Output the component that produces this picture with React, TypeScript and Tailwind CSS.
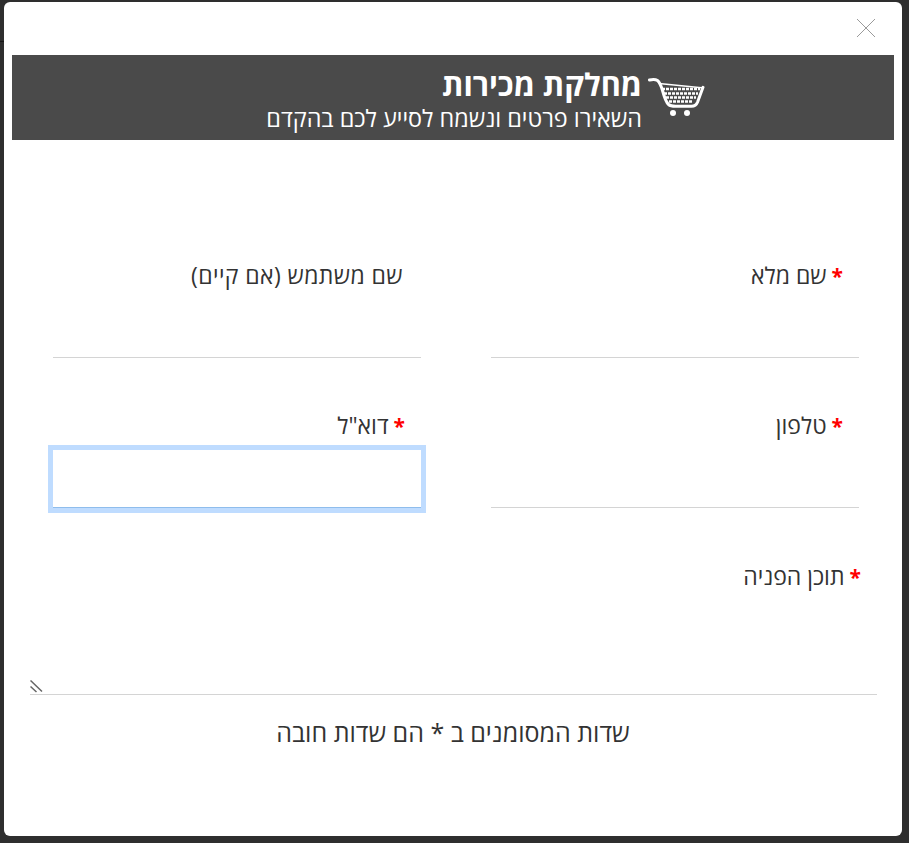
const labelClass = "block h-[30px] pr-4 text-[23px] leading-[30px] text-[#333]";
const fieldClass = "mt-[10px] block h-[58px] w-full border-b border-[#d4d4d4] bg-white px-3 text-[#333] outline-none";

function Star() {
  return <span className="ml-[5px] text-[21px] font-bold text-[#ff0000]">*</span>;
}

function CartIcon() {
  return (
    <svg width="58" height="42" viewBox="0 0 58 42" fill="none" className="shrink-0">
      <path d="M1.500 3c3-.8 6-.8 8 .5 2 1.500 3.500 5 5 10 1.500 5.500 3 11 6 14 2 1.700 4 1.800 7 1.800h16c3 0 5-1.500 6-4l5.500-15" stroke="#fff" strokeWidth="3" strokeLinecap="round" />
      <path d="M11 6.500l45 4.500" stroke="#fff" strokeWidth="1.500" />
      <path d="M14 12h38M16 16.500h34M18 20.500h30M21 24.500h24" stroke="#fff" strokeWidth="2.500" strokeDasharray="3 1" />
      <circle cx="25" cy="36" r="3" fill="#fff" />
      <circle cx="39" cy="36" r="3" fill="#fff" />
    </svg>
  );
}

export default function App() {
  return (
    <div
      dir="rtl"
      className="relative h-[843px] overflow-hidden bg-[#2e2e2e] pt-[2px] pr-[7px] pl-[4px] font-['Open_Sans','Noto_Sans',sans-serif]"
    >
      <div className="absolute top-[41px] left-0 h-px w-[4px] bg-[#161616]" />
      <div className="h-[834px] w-[898px] rounded-md bg-white">
        <div className="flex h-[53px] items-start justify-start pt-[16px] pr-[26px]">
          <svg width="20" height="20" viewBox="0 0 20 20" className="shrink-0">
            <path d="M1 1l18 18M19 1L1 19" stroke="#9a9a9a" strokeWidth="1" />
          </svg>
        </div>

        <div className="mx-2 flex h-[85px] items-center gap-[6px] bg-[#4a4a4a] pr-[188px] text-white">
          <CartIcon />
          <div className="pt-[6px]">
            <h2 className="text-[30.700px] leading-[34px] font-bold">מחלקת מכירות</h2>
            <p className="text-[23.400px] leading-[34px]">השאירו פרטים ונשמח לסייע לכם בהקדם</p>
          </div>
        </div>

        <form className="pt-[120px]">
          <div className="grid grid-cols-2 gap-x-[70px] gap-y-[52px] pr-[43px] pl-[49px]">
            <div>
              <label className={labelClass}><Star />שם מלא</label>
              <input className={fieldClass} />
            </div>
            <div>
              <label className="block h-[30px] pr-[18px] text-[23px] leading-[30px] tracking-[0.400px] text-[#333]">שם משתמש (אם קיים)</label>
              <input className={fieldClass} />
            </div>
            <div>
              <label className={labelClass}><Star />טלפון</label>
              <input className={fieldClass} />
            </div>
            <div>
              <label className={labelClass}><Star />דוא"ל</label>
              <input className="mt-[10px] block h-[58px] w-full border-b border-[#8fbdec] bg-white px-3 text-[#333] outline-[5px] outline-[#bfdcff] outline-solid" />
            </div>
          </div>

          <div className="mt-[53px] pr-[25px] pl-[26px]">
            <label className={labelClass}><Star />תוכן הפניה</label>
            <div className="relative mt-[10px]">
              <textarea className="block h-[94px] w-full resize-none border-b border-[#d4d4d4] bg-white px-3 text-[#333] outline-none" />
              <svg width="14" height="14" viewBox="0 0 14 14" className="absolute bottom-[1px] left-0">
                <path d="M.500.500l11.500 11M.500 6.500l6 5.500" stroke="#666" strokeWidth="1.500" fill="none" />
              </svg>
            </div>
          </div>

          <p className="mt-[23px] text-center text-[25px] leading-[28px] text-[#333]">שדות המסומנים ב * הם שדות חובה</p>
        </form>
      </div>
    </div>
  );
}
